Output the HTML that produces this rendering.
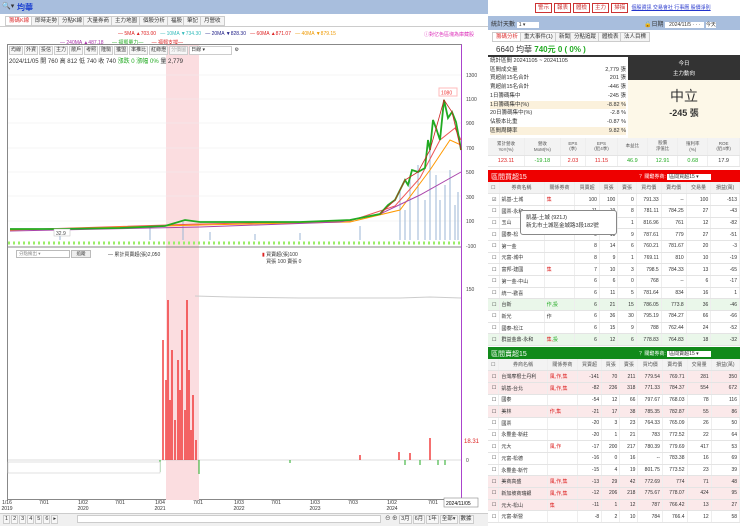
<!DOCTYPE html><html><head><meta charset="utf-8"><style>
*{box-sizing:border-box;margin:0;padding:0}
body{width:740px;height:526px;overflow:hidden;background:#fff;font-family:"Liberation Sans","Noto Sans CJK TC",sans-serif;font-size:6px;color:#333;position:relative}
.a{position:absolute}
.tab{position:absolute;top:16px;height:10px;border:1px solid #ccc;background:#f4f4f4;font-size:5.5px;line-height:8px;padding:0 3px}
.btn{display:inline-block;border:1px solid #c33;color:#c33;background:#fff;font-size:5.5px;padding:0 2px;margin-right:2px;line-height:8px}
.tb{display:inline-block;border:1px solid #ccc;background:#f7f7f7;padding:0 1px;margin-right:1px;line-height:7px}
table{border-collapse:collapse;font-size:5px}
td,th{border-bottom:1px solid #e4e4e4;border-right:1px solid #eee;height:11.7px;padding:0 2px;text-align:right;font-weight:normal;white-space:nowrap}
th{text-align:center;background:#f3f3f3;color:#555}
td.l{text-align:left}
tr.p td{background:#fbe9ea}
tr.g td{background:#eaf7ea}
.r{color:#d22}.gr{color:#2a2}
</style></head><body>
<div class="a" style="left:0;top:0;width:488px;height:14px;background:#a8bedd"></div>
<div class="a" style="left:2px;top:2px;font-size:7px;color:#333">🔍▾</div>
<div class="a" style="left:17px;top:2px;font-size:8px;color:#1a3fd0;font-weight:bold">均華</div>
<div class="tab" style="left:5px;color:#d33;background:#fff">籌碼K線</div>
<div class="tab" style="left:31px">即時走勢</div>
<div class="tab" style="left:58px">分點K線</div>
<div class="tab" style="left:83px">大量券商</div>
<div class="tab" style="left:111px">主力地圖</div>
<div class="tab" style="left:139px">個股分析</div>
<div class="tab" style="left:167px">福股</div>
<div class="tab" style="left:183px">筆記</div>
<div class="tab" style="left:200px">月營收</div>
<div class="a" style="left:0;top:26px;width:488px;height:1px;background:#ccc"></div>
<div class="a" style="top:31px;left:118px;font-size:5px;white-space:nowrap"><span class="r">— 5MA ▲703.00</span> &nbsp; <span style="color:#3bb">— 10MA ▼734.30</span> &nbsp; <span style="color:#228">— 20MA ▼828.30</span> &nbsp; <span class="r">— 60MA ▲871.07</span> &nbsp; <span style="color:#e90">— 40MA ▼879.15</span></div>
<div class="a" style="top:39px;left:60px;font-size:5px;white-space:nowrap"><span style="color:#a3a">— 240MA ▲487.18</span> &nbsp; &nbsp; &nbsp;<span class="gr">— 福郵量力—</span> &nbsp; &nbsp; &nbsp;<span class="r">— 福郵支撐—</span></div>
<div class="a" style="top:31px;left:424px;font-size:5px;color:#d3b">ⓘ對亿色區塊為庫藏股</div>
<div class="a" style="top:44px;left:7px;width:455px;height:456px;border:1px solid #888;border-right:1px solid #a4c"></div>
<div class="a" style="top:45px;left:166px;width:33px;height:455px;background:#fbdde0"></div>
<div class="a" style="top:46px;left:9px;font-size:5px;white-space:nowrap"><span class="tb">均線</span><span class="tb">外資</span><span class="tb">投信</span><span class="tb">主力</span><span class="tb">散戶</span><span class="tb">考照</span><span class="tb">隆駒</span><span class="tb">獲盟</span><span class="tb">率推比</span><span class="tb">紅綠燈</span><span class="tb" style="color:#aaa">分價圖</span><span class="tb" style="background:#fff;padding-right:26px">日線 ▾</span> ⚙</div>
<div class="a" style="top:56px;left:9px;font-size:6px;white-space:nowrap">2024/11/05 開 760 高 812 低 740 收 740 <span class="gr">漲跌 0 漲幅 0%</span> 量 2,779</div>
<svg class="a" style="left:0;top:0;z-index:2" width="488" height="526" viewBox="0 0 488 526">
<g stroke="#eee" stroke-width="0.6"><line x1="8" x2="461" y1="75" y2="75"/><line x1="8" x2="461" y1="99" y2="99"/><line x1="8" x2="461" y1="123" y2="123"/><line x1="8" x2="461" y1="148" y2="148"/><line x1="8" x2="461" y1="172" y2="172"/><line x1="8" x2="461" y1="196" y2="196"/><line x1="8" x2="461" y1="221" y2="221"/></g>
<g stroke="#9bb6d4" stroke-width="1">
<path d="M60 240V232M150 240V228M183 240V222M210 240V232M255 240V234M300 240V233M360 240V226M400 240V190M405 240V210M410 240V180M418 240V165M425 240V200M430 240V150M436 240V175M440 240V200M445 240V185M450 240V170M455 240V205M458 240V192"/></g>
<line x1="8" y1="243" x2="461" y2="243" stroke="#9e6" stroke-width="3" stroke-dasharray="2 3"/>
<polyline points="10,230 200,224 350,221 395,206 420,178 440,140 455,128 461,140" fill="none" stroke="#e55" stroke-width="1"/>
<polyline points="10,230 200,225 350,222 400,210 430,170 450,140 461,145" fill="none" stroke="#f90" stroke-width="1"/>
<polyline points="10,231 200,227 340,222 380,214 420,195 461,172" fill="none" stroke="#a4a" stroke-width="1"/>
<polyline points="10,229 60,229 120,228 165,226 185,220 200,222 250,222 300,222 350,220 380,214 388,205 395,200 400,190 405,180 408,185 412,170 418,172 425,168 428,140 430,150 433,120 436,128 440,140 444,100 448,118 452,112 456,122 459,138 461,150" fill="none" stroke="#2a2" stroke-width="1.8"/>
<polyline points="380,214 395,200 405,180 418,172 430,150 444,100 452,112 461,150" fill="none" stroke="#c22" stroke-width="0.8"/>
<rect x="439" y="88" width="18" height="8" fill="#fff" stroke="#fbb"/><text x="441" y="94.5" font-size="5" fill="#e33">1080</text>
<g font-size="5" fill="#444"><text x="466" y="77">1300</text><text x="466" y="101">1100</text><text x="466" y="125">900</text><text x="466" y="150">700</text><text x="466" y="174">500</text><text x="466" y="199">300</text><text x="466" y="223">100</text><text x="466" y="248">-100</text><text x="466" y="291">150</text><text x="466" y="462">0</text><text x="464" y="443" fill="#d22" font-size="6">18.31</text></g>
<rect x="54" y="229" width="16" height="7" fill="#fff" stroke="#bbb" stroke-width=".5"/><text x="56" y="235" font-size="5" fill="#444">32.9</text>
<line x1="8" x2="461" y1="247" y2="247" stroke="#888"/>
<polyline points="195,296 230,297 300,298 400,298 430,297 461,298" fill="none" stroke="#ccc" stroke-width="1"/>
<line x1="8" x2="461" y1="460" y2="460" stroke="#bbb" stroke-width=".6"/>
<g stroke="#e11" stroke-width="1.2"><path d="M163 460V340M166 460V380M168 460V320M170 460V400M172 460V350M175 460V420M178 460V360M180 460V390M182 460V330M185 460V410M187 460V300M189 460V370M191 460V430M193 460V395M196 460V440M168 460V300M430 460V438M399 460V452M360 460V455M410 460V453"/></g>
<g stroke="#2a2" stroke-width="1"><path d="M160 460V472M199 460V474M290 460V463M405 460V465M420 460V465M438 460V465M445 460V465"/></g>
<rect x="8" y="462" width="152" height="11" fill="#fff" stroke="#ccc" stroke-width=".6"/>
<g font-size="5" fill="#333" text-anchor="middle"><text x="7" y="504">1/16</text><text x="7" y="510">2019</text><text x="44" y="504">7/01</text><text x="83" y="504">1/02</text><text x="83" y="510">2020</text><text x="120" y="504">7/01</text><text x="160" y="504">1/04</text><text x="160" y="510">2021</text><text x="198" y="504">7/01</text><text x="239" y="504">1/03</text><text x="239" y="510">2022</text><text x="276" y="504">7/01</text><text x="315" y="504">1/03</text><text x="315" y="510">2023</text><text x="353" y="504">7/03</text><text x="392" y="504">1/02</text><text x="392" y="510">2024</text><text x="433" y="504">7/01</text></g>
<rect x="444" y="498" width="34" height="9" fill="#fff" stroke="#888" stroke-width=".6"/><text x="446" y="505" font-size="5">2024/11/05</text>
</svg>
<div class="a" style="top:250px;left:16px;width:54px;height:8px;border:1px solid #bbb;font-size:4.5px;color:#888;padding-left:2px">分點擁出 ▾</div>
<div class="a" style="top:250px;left:71px;width:20px;height:8px;border:1px solid #bbb;background:#eee;font-size:4.5px;text-align:center">追蹤</div>
<div class="a" style="top:251px;left:108px;font-size:5px">— 累計買賣超(張)2,050</div>
<div class="a" style="top:251px;left:262px;font-size:5px"><span class="r">▮</span> 買賣超(張)100<br>&nbsp;&nbsp; 買張 100 賣張 0</div>
<div class="a" style="top:513px;left:0;width:488px;height:13px;background:#f0f0f0;border-top:1px solid #ccc"></div>
<div class="a" style="top:515px;left:3px;font-size:5.5px;white-space:nowrap"><span class="tb">1</span><span class="tb">2</span><span class="tb">3</span><span class="tb">4</span><span class="tb">5</span><span class="tb">6</span><span class="tb">▸</span></div>
<div class="a" style="top:515px;left:77px;width:304px;height:8px;background:#fff;border:1px solid #ccc"></div>
<div class="a" style="top:514px;left:385px;font-size:5.5px;white-space:nowrap">⊖ ⊕ <span class="tb">3月</span><span class="tb">6月</span><span class="tb">1年</span><span class="tb">全部▾</span><span class="tb">數據</span></div>
<!-- right -->
<div class="a" style="left:488px;top:0;width:252px;height:14px;background:#fff;padding:3px 0 0 47px;font-size:5px;white-space:nowrap"><span class="btn">警示</span><span class="btn">報表</span><span class="btn">體檢</span><span class="btn">主力</span><span class="btn">掃描</span> <span style="color:#23c;text-decoration:underline">個股資訊 交易會社 行事曆 股價淨別</span></div>
<div class="a" style="left:488px;top:16px;width:252px;height:14px;background:#a8bedd;font-size:6px;padding:3px 3px"><span>統計天數</span> <span style="background:#fff;padding:0 14px 0 2px;font-size:5px">1 ▾</span><span style="position:absolute;left:156px">🔒日期 <span style="background:#fff;font-size:5px;padding:0 4px">2024/11/5 · · ·</span> <span style="background:#fff;font-size:5px">今天</span></span></div>
<div class="tab" style="left:492px;top:32px;color:#d33;background:#fff">籌碼分析</div>
<div class="tab" style="left:520px;top:32px">重大事件(1)</div>
<div class="tab" style="left:555px;top:32px">新聞</div>
<div class="tab" style="left:570px;top:32px">分點追蹤</div>
<div class="tab" style="left:598px;top:32px">體檢表</div>
<div class="tab" style="left:620px;top:32px">法人目標</div>
<div class="a" style="left:496px;top:44px;font-size:8px;white-space:nowrap">6640 均華 <span style="color:#2a2;font-weight:bold">740元 0 ( 0% )</span></div>
<div class="a" style="left:488px;top:55px;width:252px;height:2px;background:#333"></div>
<div class="a" style="left:628px;top:57px;width:112px;height:23px;background:#333;color:#fff;font-size:5.5px;text-align:center;line-height:10px;padding-top:2px">今日<br>主力動向</div>
<div class="a" style="left:628px;top:80px;width:112px;height:58px;background:#fdf8e8;text-align:center"><div style="font-size:14px;margin-top:6px">中立</div><div style="font-size:9px;font-weight:bold">-245 張</div></div>
<div class="a" style="left:490px;top:57px;width:136px;font-size:5.5px;line-height:8.7px">
<div>統計區間 20241105 ~ 20241105</div>
<div>區間成交量<span style="float:right">2,779 張</span></div>
<div>買超前15名合計<span style="float:right">201 張</span></div>
<div>賣超前15名合計<span style="float:right">-446 張</span></div>
<div>1日籌碼集中<span style="float:right">-245 張</span></div>
<div style="background:#fbf1dc">1日籌碼集中(%)<span style="float:right">-8.82 %</span></div>
<div>20日籌碼集中(%)<span style="float:right">-2.8 %</span></div>
<div>佔股本比重<span style="float:right">-0.87 %</span></div>
<div style="background:#fbf1dc">區間周轉率<span style="float:right">9.82 %</span></div></div>
<table class="a" style="left:488px;top:138px;width:252px;font-size:4.5px"><tr style="height:17px"><th>累計營收<br>YoY(%)</th><th>營收<br>MoM(%)</th><th>EPS<br>(季)</th><th>EPS<br>(近4季)</th><th>本益比</th><th>股價<br>淨值比</th><th>殖利率<br>(%)</th><th>ROE<br>(近4季)</th></tr>
<tr style="font-weight:bold;font-size:5.5px;text-align:center"><td class="r" style="text-align:center">123.11</td><td class="gr" style="text-align:center">-19.18</td><td class="r" style="text-align:center">2.03</td><td class="r" style="text-align:center">11.15</td><td class="gr" style="text-align:center">46.9</td><td class="gr" style="text-align:center">12.91</td><td class="gr" style="text-align:center">0.68</td><td style="text-align:center">17.9</td></tr></table>
<div class="a" style="left:488px;top:170px;width:252px;height:12px;background:#e00;color:#fff;font-size:7px;padding:2px 3px">區間買超15<span style="position:absolute;left:150px;font-size:5px;top:3px">？ 關鍵券商: <span style="background:#fff;color:#333;padding:0 12px 0 2px">區間買超15 ▾</span></span></div>
<table class="a" style="left:488px;top:182px;width:252px">
<tr><th>☐</th><th>券商名稱</th><th>關係券商</th><th>買賣超</th><th>買張</th><th>賣張</th><th>買均價</th><th>賣均價</th><th>交易量</th><th>損益(萬)</th></tr>
<tr><td>☑</td><td class="l">凱基-土城</td><td class="l r">集</td><td>100</td><td>100</td><td>0</td><td>791.33</td><td>--</td><td>100</td><td>-513</td></tr>
<tr><td>☐</td><td class="l">國票-永和</td><td></td><td>11</td><td>19</td><td>8</td><td>781.11</td><td>784.25</td><td>27</td><td>-43</td></tr>
<tr><td>☐</td><td class="l">玉山</td><td></td><td>11</td><td>12</td><td>1</td><td>816.96</td><td>761</td><td>12</td><td>-82</td></tr>
<tr><td>☐</td><td class="l">國泰-松</td><td></td><td>9</td><td>18</td><td>9</td><td>787.61</td><td>779</td><td>27</td><td>-51</td></tr>
<tr><td>☐</td><td class="l">第一金</td><td></td><td>8</td><td>14</td><td>6</td><td>760.21</td><td>781.67</td><td>20</td><td>-3</td></tr>
<tr><td>☐</td><td class="l">元富-城中</td><td></td><td>8</td><td>9</td><td>1</td><td>769.11</td><td>810</td><td>10</td><td>-19</td></tr>
<tr><td>☐</td><td class="l">富邦-建國</td><td class="l r">集</td><td>7</td><td>10</td><td>3</td><td>798.5</td><td>784.33</td><td>13</td><td>-65</td></tr>
<tr><td>☐</td><td class="l">第一金-中山</td><td></td><td>6</td><td>6</td><td>0</td><td>768</td><td>--</td><td>6</td><td>-17</td></tr>
<tr><td>☐</td><td class="l">統一-歡喜</td><td></td><td>6</td><td>11</td><td>5</td><td>781.64</td><td>834</td><td>16</td><td>1</td></tr>
<tr class="g"><td>☐</td><td class="l">台新</td><td class="l gr">作,投</td><td>6</td><td>21</td><td>15</td><td>786.05</td><td>773.8</td><td>36</td><td>-46</td></tr>
<tr><td>☐</td><td class="l">新光</td><td class="l">作</td><td>6</td><td>36</td><td>30</td><td>795.19</td><td>784.27</td><td>66</td><td>-66</td></tr>
<tr><td>☐</td><td class="l">國泰-松江</td><td></td><td>6</td><td>15</td><td>9</td><td>788</td><td>762.44</td><td>24</td><td>-52</td></tr>
<tr class="g"><td>☐</td><td class="l">群益金鼎-永和</td><td class="l r">集,<span class="gr">投</span></td><td>6</td><td>12</td><td>6</td><td>778.83</td><td>764.83</td><td>18</td><td>-32</td></tr>
</table>
<div class="a" style="left:520px;top:210px;width:97px;height:25px;background:#fff;border:1px solid #888;border-radius:3px;font-size:5.5px;padding:3px 5px;line-height:8px">凱基-土城 (921J)<br>新北市土城區金城路3段182號</div>
<div class="a" style="left:488px;top:347px;width:252px;height:12px;background:#118a1a;color:#fff;font-size:7px;padding:2px 3px">區間賣超15<span style="position:absolute;left:150px;font-size:5px;top:3px">？ 關鍵券商: <span style="background:#fff;color:#333;padding:0 12px 0 2px">區間賣超15 ▾</span></span></div>
<table class="a" style="left:488px;top:359px;width:252px">
<tr><th>☐</th><th>券商名稱</th><th>關係券商</th><th>買賣超</th><th>買張</th><th>賣張</th><th>買均價</th><th>賣均價</th><th>交易量</th><th>損益(萬)</th></tr>
<tr class="p"><td>☐</td><td class="l">台灣摩根士丹利</td><td class="l r">風,作,集</td><td>-141</td><td>70</td><td>211</td><td>779.54</td><td>769.71</td><td>281</td><td>350</td></tr>
<tr class="p"><td>☐</td><td class="l">凱基-台北</td><td class="l r">風,作,集</td><td>-82</td><td>236</td><td>318</td><td>771.33</td><td>784.37</td><td>554</td><td>672</td></tr>
<tr><td>☐</td><td class="l">國泰</td><td></td><td>-54</td><td>12</td><td>66</td><td>797.67</td><td>768.03</td><td>78</td><td>116</td></tr>
<tr class="p"><td>☐</td><td class="l">美林</td><td class="l r">作,集</td><td>-21</td><td>17</td><td>38</td><td>785.35</td><td>782.87</td><td>55</td><td>86</td></tr>
<tr><td>☐</td><td class="l">國票</td><td></td><td>-20</td><td>3</td><td>23</td><td>764.33</td><td>765.09</td><td>26</td><td>50</td></tr>
<tr><td>☐</td><td class="l">永豐金-新莊</td><td></td><td>-20</td><td>1</td><td>21</td><td>783</td><td>772.52</td><td>22</td><td>64</td></tr>
<tr><td>☐</td><td class="l">元大</td><td class="l r">風,作</td><td>-17</td><td>200</td><td>217</td><td>780.39</td><td>779.69</td><td>417</td><td>53</td></tr>
<tr><td>☐</td><td class="l">元富-松德</td><td></td><td>-16</td><td>0</td><td>16</td><td>--</td><td>783.38</td><td>16</td><td>69</td></tr>
<tr><td>☐</td><td class="l">永豐金-新竹</td><td></td><td>-15</td><td>4</td><td>19</td><td>801.75</td><td>773.52</td><td>23</td><td>39</td></tr>
<tr class="p"><td>☐</td><td class="l">美商高盛</td><td class="l r">風,作,集</td><td>-13</td><td>29</td><td>42</td><td>772.69</td><td>774</td><td>71</td><td>48</td></tr>
<tr class="p"><td>☐</td><td class="l">新加坡商瑞銀</td><td class="l r">風,作,集</td><td>-12</td><td>206</td><td>218</td><td>775.67</td><td>778.07</td><td>424</td><td>95</td></tr>
<tr class="p"><td>☐</td><td class="l">元大-松山</td><td class="l r">集</td><td>-11</td><td>1</td><td>12</td><td>787</td><td>766.42</td><td>13</td><td>27</td></tr>
<tr><td>☐</td><td class="l">元富-新營</td><td></td><td>-8</td><td>2</td><td>10</td><td>784</td><td>766.4</td><td>12</td><td>58</td></tr>
</table>
</body></html>
